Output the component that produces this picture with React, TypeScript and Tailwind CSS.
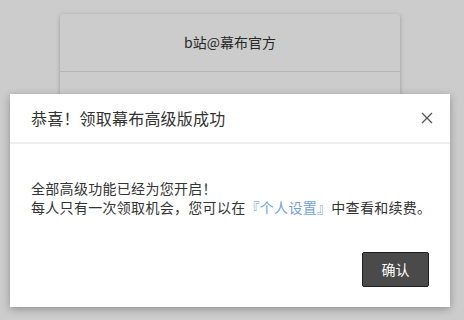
import React from "react";

export default function App() {
  const font = { fontFamily: '"Noto Sans CJK SC", "Noto Sans", sans-serif' };
  return (
    <div className="relative h-[320px] w-[464px] overflow-hidden bg-white" style={font}>
      <div className="pt-[14px] pl-[60px]">
        <div className="w-[340px] h-[200px] rounded-[3px] bg-white shadow-[0_1px_4px_rgba(0,0,0,0.25)]">
          <div className="flex h-[58px] items-center justify-center border-b border-[#e2e2e2] text-[14px] text-[#333]">
            b站@幕布官方
          </div>
        </div>
      </div>
      <div className="absolute inset-0 bg-black/20" />
      <div className="absolute left-[10px] top-[94px] w-[440px] h-[213px] bg-white shadow-[0_2px_8px_rgba(0,0,0,0.3)] flex flex-col">
        <div className="flex h-[50px] items-center justify-between border-b-2 border-[#eeeeee] pl-[21px] pr-[17px]">
          <span className="text-[16px] tracking-[0.2px] text-[#333]">恭喜！领取幕布高级版成功</span>
          <svg width="12" height="12" viewBox="0 0 12 12" className="text-[#555]">
            <path d="M1 1L11 11M11 1L1 11" stroke="currentColor" strokeWidth="1.3" />
          </svg>
        </div>
        <div className="pl-[21px] pt-[35px] text-[14px] leading-[19px] tracking-[0.3px] text-[#333]">
          <p>全部高级功能已经为您开启！</p>
          <p>
            每人只有一次领取机会，您可以在<span className="text-[#6fa3dc]">『个人设置』</span>中查看和续费。
          </p>
        </div>
        <div className="mt-auto flex justify-end pr-[21px] pb-[20px]">
          <button className="h-[35px] w-[67px] rounded-[2px] border border-[#1f1f1f] bg-[#4a4a4a] text-[14px] text-white">
            确认
          </button>
        </div>
      </div>
    </div>
  );
}
